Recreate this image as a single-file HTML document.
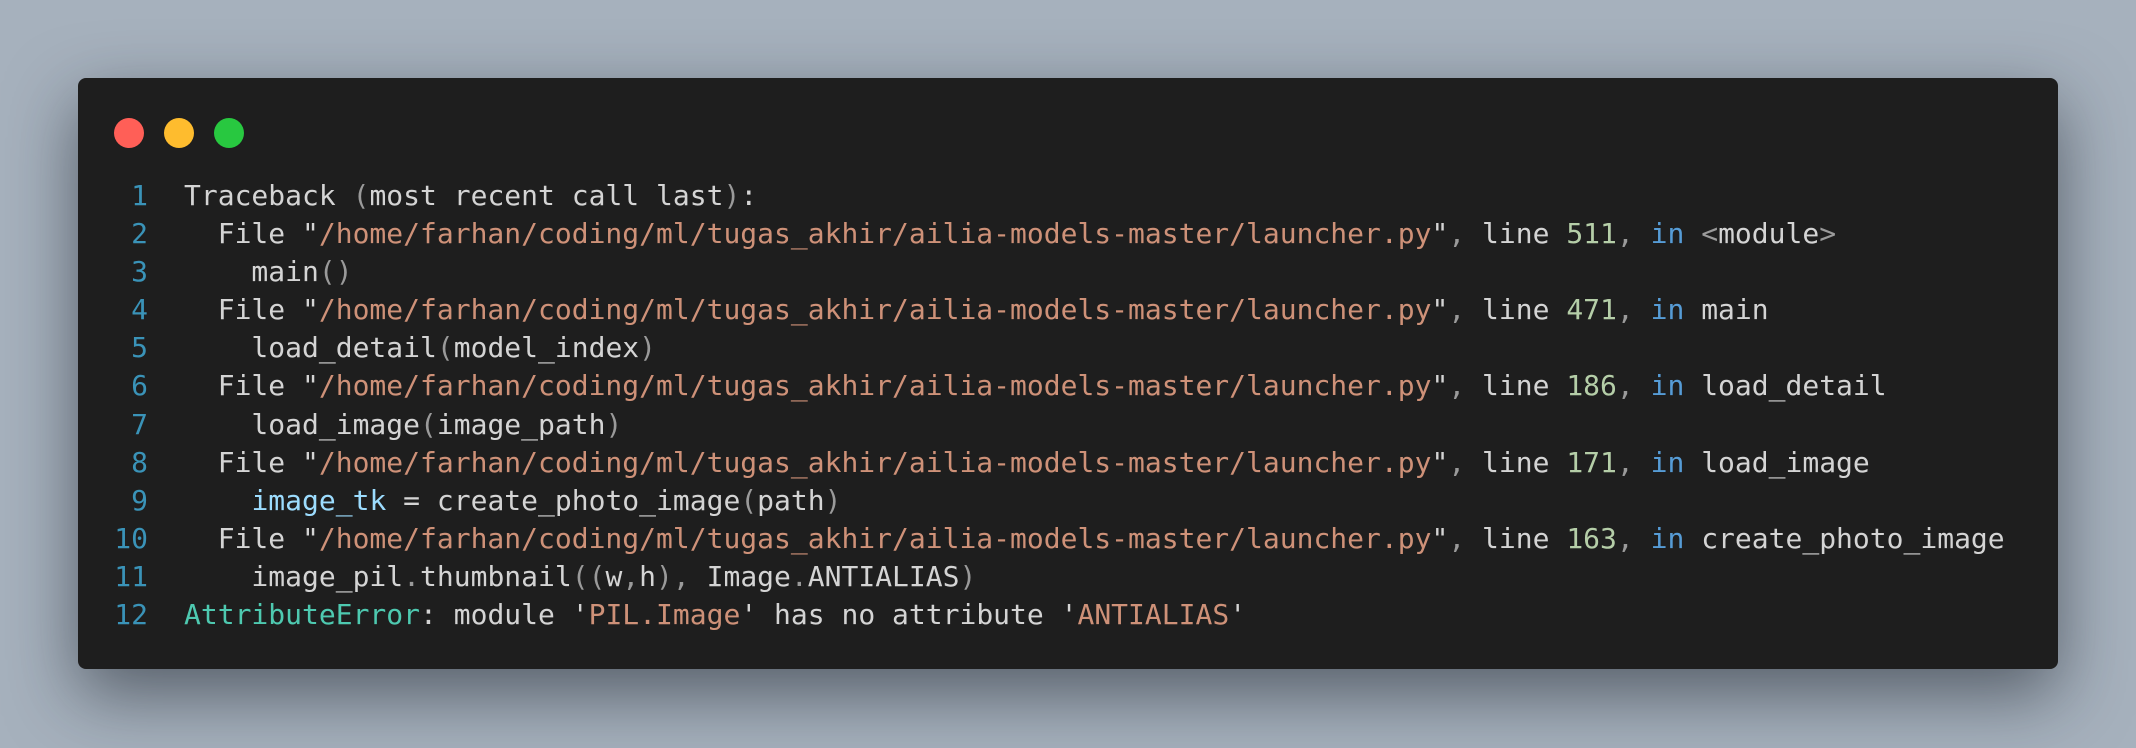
<!DOCTYPE html>
<html><head><meta charset="utf-8"><style>
html,body{margin:0;padding:0}
body{width:2136px;height:748px;background:#a6b1bd;position:relative;overflow:hidden}
.win{position:absolute;left:78px;top:78px;width:1980px;height:591px;background:#1e1e1e;border-radius:8px;box-shadow:0 25px 70px rgba(20,25,35,.55)}
.dot{position:absolute;top:118px;width:30px;height:30px;border-radius:50%}
pre{position:absolute;left:0;top:177px;margin:0;font-family:"DejaVu Sans Mono","Liberation Mono",monospace;font-size:28px;line-height:38.1px;color:#d4d4d4;white-space:pre}
.n{display:inline-block;width:148px;text-align:right;color:#3a93b8;margin-right:36px}
.s{color:#ce9178}.d{color:#b5cea8}.k{color:#569cd6}.v{color:#9cdcfe}.c{color:#4ec9b0}.p{color:#9a9a9a}
</style></head><body>
<div class="win"></div>
<div class="dot" style="left:114px;background:#ff5f57"></div>
<div class="dot" style="left:164px;background:#febc2e"></div>
<div class="dot" style="left:214px;background:#28c840"></div>
<pre><span class="n">1</span>Traceback <span class="p">(</span>most recent call last<span class="p">)</span>:
<span class="n">2</span>  File "<span class="s">/home/farhan/coding/ml/tugas_akhir/ailia-models-master/launcher.py</span>"<span class="p">,</span> line <span class="d">511</span><span class="p">,</span> <span class="k">in</span> <span class="p">&lt;</span>module<span class="p">&gt;</span>
<span class="n">3</span>    main<span class="p">()</span>
<span class="n">4</span>  File "<span class="s">/home/farhan/coding/ml/tugas_akhir/ailia-models-master/launcher.py</span>"<span class="p">,</span> line <span class="d">471</span><span class="p">,</span> <span class="k">in</span> main
<span class="n">5</span>    load_detail<span class="p">(</span>model_index<span class="p">)</span>
<span class="n">6</span>  File "<span class="s">/home/farhan/coding/ml/tugas_akhir/ailia-models-master/launcher.py</span>"<span class="p">,</span> line <span class="d">186</span><span class="p">,</span> <span class="k">in</span> load_detail
<span class="n">7</span>    load_image<span class="p">(</span>image_path<span class="p">)</span>
<span class="n">8</span>  File "<span class="s">/home/farhan/coding/ml/tugas_akhir/ailia-models-master/launcher.py</span>"<span class="p">,</span> line <span class="d">171</span><span class="p">,</span> <span class="k">in</span> load_image
<span class="n">9</span>    <span class="v">image_tk</span> = create_photo_image<span class="p">(</span>path<span class="p">)</span>
<span class="n">10</span>  File "<span class="s">/home/farhan/coding/ml/tugas_akhir/ailia-models-master/launcher.py</span>"<span class="p">,</span> line <span class="d">163</span><span class="p">,</span> <span class="k">in</span> create_photo_image
<span class="n">11</span>    image_pil<span class="p">.</span>thumbnail<span class="p">((</span>w<span class="p">,</span>h<span class="p">),</span> Image<span class="p">.</span>ANTIALIAS<span class="p">)</span>
<span class="n">12</span><span class="c">AttributeError</span>: module '<span class="s">PIL.Image</span>' has no attribute '<span class="s">ANTIALIAS</span>'</pre>
</body></html>
